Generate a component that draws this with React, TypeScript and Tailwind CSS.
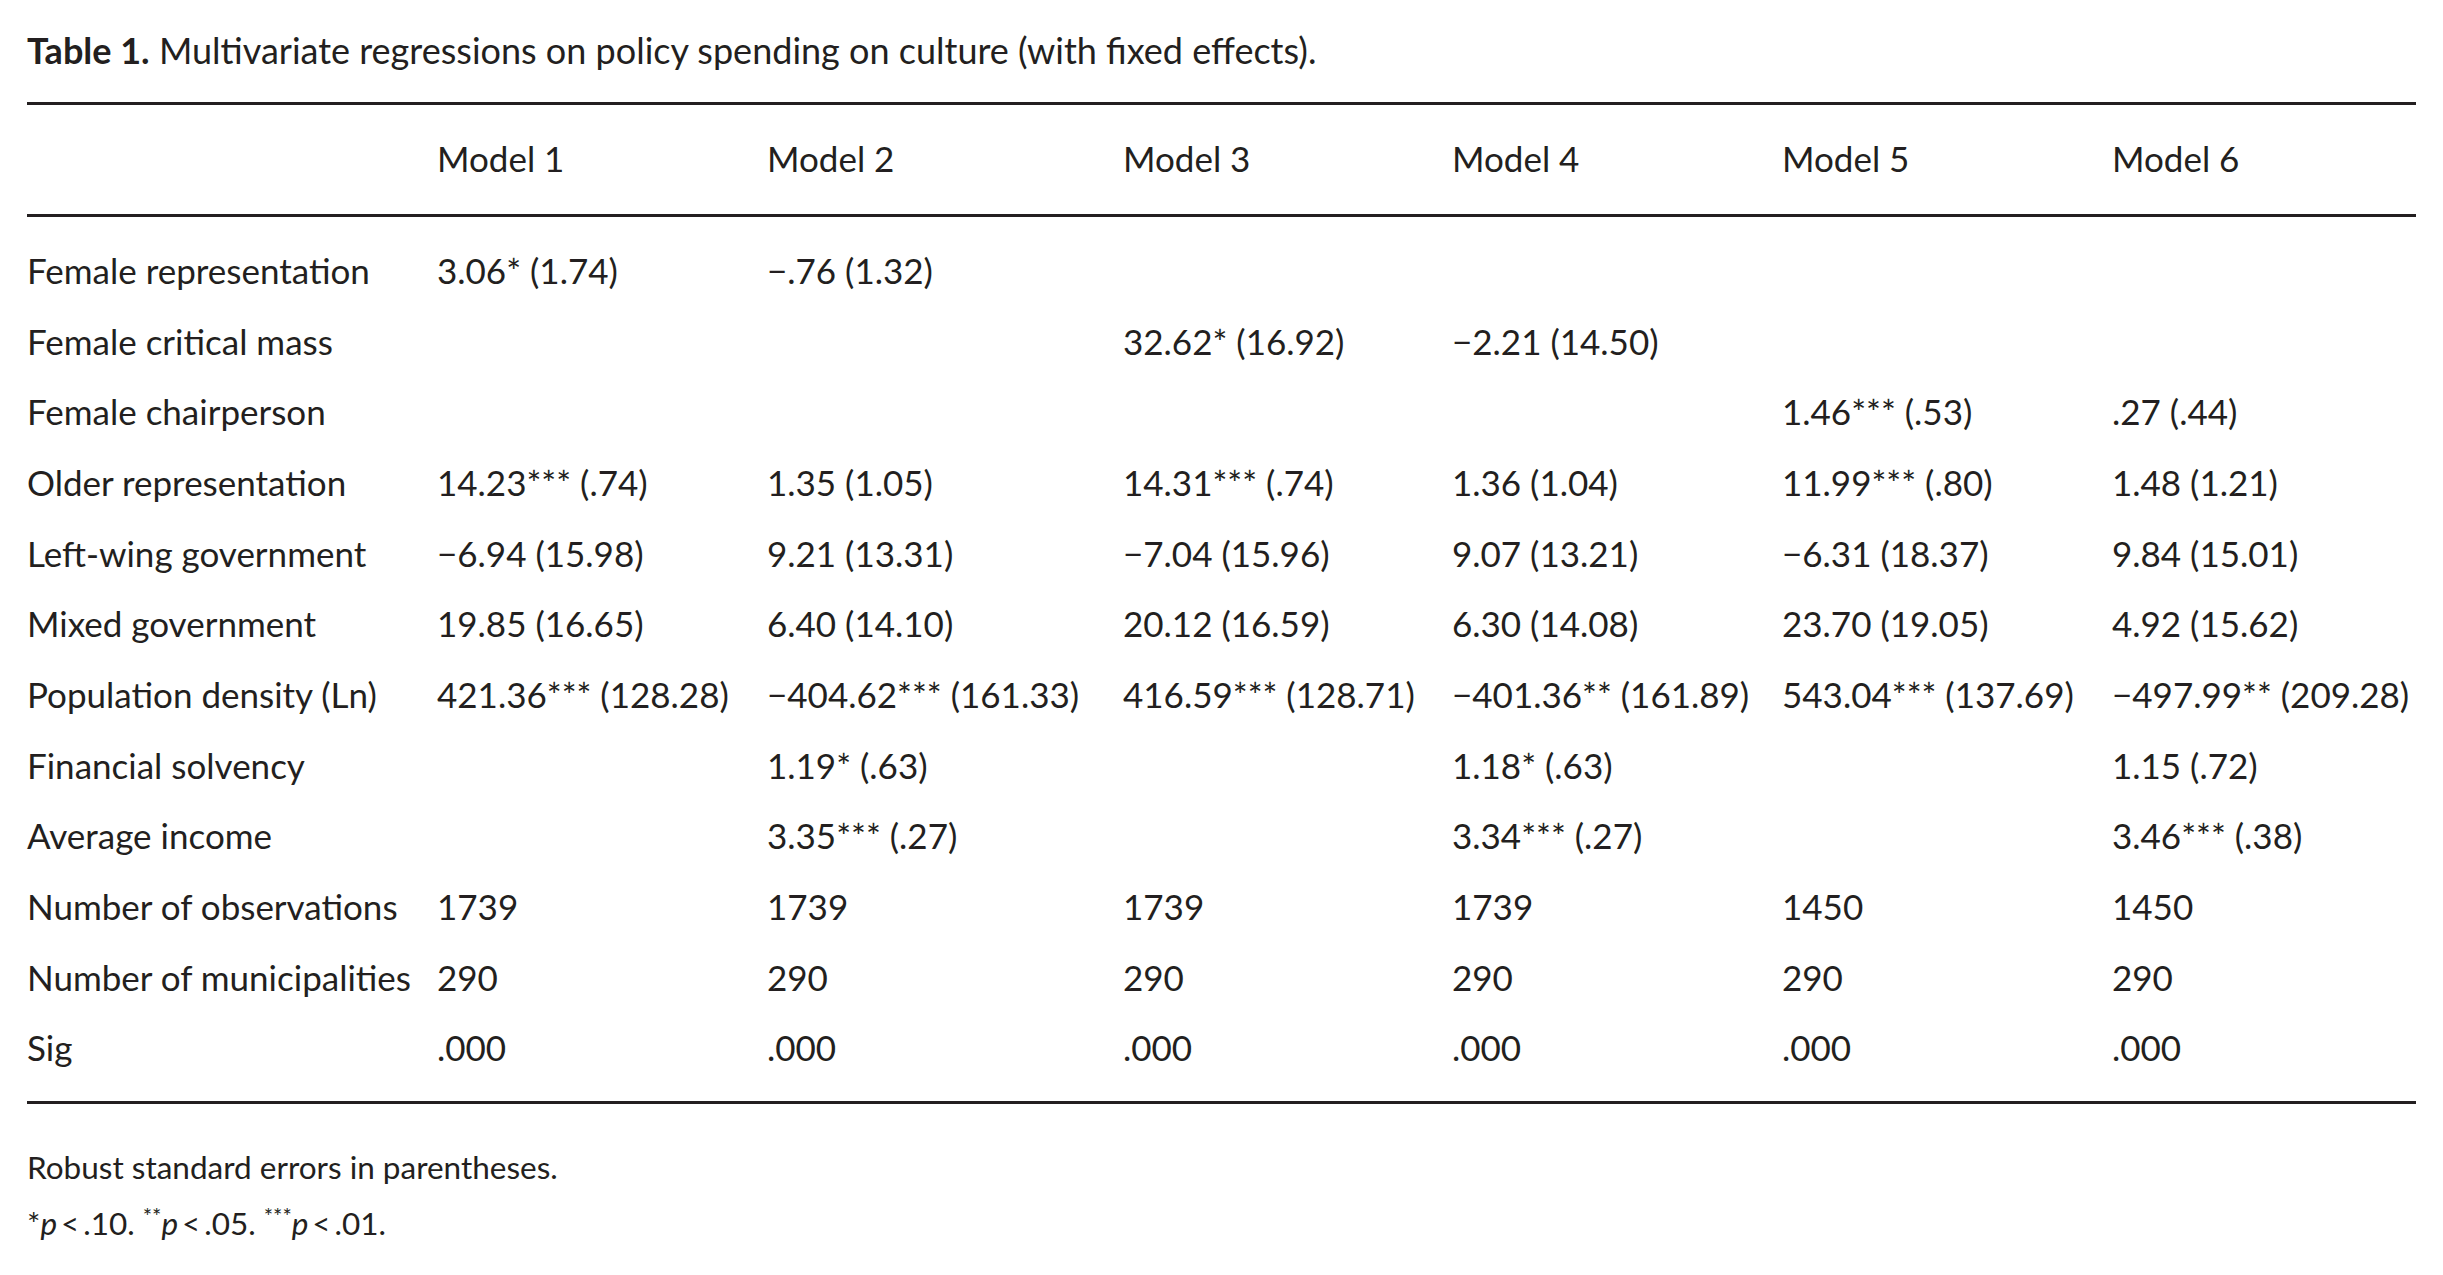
import React from 'react';

type Row = {
  label: string;
  cells: string[];
};

const rows: Row[] = [
  { label: 'Female representation', cells: ['3.06* (1.74)', '\u2212.76 (1.32)', '', '', '', ''] },
  { label: 'Female critical mass', cells: ['', '', '32.62* (16.92)', '\u22122.21 (14.50)', '', ''] },
  { label: 'Female chairperson', cells: ['', '', '', '', '1.46*** (.53)', '.27 (.44)'] },
  { label: 'Older representation', cells: ['14.23*** (.74)', '1.35 (1.05)', '14.31*** (.74)', '1.36 (1.04)', '11.99*** (.80)', '1.48 (1.21)'] },
  { label: 'Left-wing government', cells: ['\u22126.94 (15.98)', '9.21 (13.31)', '\u22127.04 (15.96)', '9.07 (13.21)', '\u22126.31 (18.37)', '9.84 (15.01)'] },
  { label: 'Mixed government', cells: ['19.85 (16.65)', '6.40 (14.10)', '20.12 (16.59)', '6.30 (14.08)', '23.70 (19.05)', '4.92 (15.62)'] },
  { label: 'Population density (Ln)', cells: ['421.36*** (128.28)', '\u2212404.62*** (161.33)', '416.59*** (128.71)', '\u2212401.36** (161.89)', '543.04*** (137.69)', '\u2212497.99** (209.28)'] },
  { label: 'Financial solvency', cells: ['', '1.19* (.63)', '', '1.18* (.63)', '', '1.15 (.72)'] },
  { label: 'Average income', cells: ['', '3.35*** (.27)', '', '3.34*** (.27)', '', '3.46*** (.38)'] },
  { label: 'Number of observations', cells: ['1739', '1739', '1739', '1739', '1450', '1450'] },
  { label: 'Number of municipalities', cells: ['290', '290', '290', '290', '290', '290'] },
  { label: 'Sig', cells: ['.000', '.000', '.000', '.000', '.000', '.000'] },
];

const models = ['Model 1', 'Model 2', 'Model 3', 'Model 4', 'Model 5', 'Model 6'];

// label column + six model columns, starts taken from the reference
const gridCols = 'grid grid-cols-[410px_330px_356px_329px_330px_330px_1fr]';

export default function App() {
  return (
    <div
      className="min-h-screen w-full bg-white px-[27px] pt-[32px] text-[#231f20]"
      style={{ fontFamily: 'Lato, "Open Sans", sans-serif' }}
    >
      {/* caption */}
      <p className="whitespace-nowrap text-[36px] leading-none">
        <span className="font-bold">Table 1.</span> Multivariate regressions on policy spending on culture (with fixed effects).
      </p>

      <div className="mt-[34px] w-[2389px]">
        <div className="h-[3px] bg-[#231f20]" />

        <div className={`${gridCols} pt-[36px] pb-[38px] text-[35px] leading-none`}>
          <div />
          {models.map((m) => (
            <div key={m} className="whitespace-nowrap">{m}</div>
          ))}
        </div>

        <div className="h-[3px] bg-[#231f20]" />

        <div className="pt-[36px] text-[35px] leading-none">
          {rows.map((row) => (
            <div key={row.label} className={`${gridCols} h-[70.67px]`}>
              <div className="whitespace-nowrap">{row.label}</div>
              {row.cells.map((c, i) => (
                <div key={i} className="whitespace-nowrap">{c}</div>
              ))}
            </div>
          ))}
        </div>

        <div className="h-[3px] bg-[#231f20]" />
      </div>

      <div className="mt-[48px] text-[31.5px] leading-none">
        <p>Robust standard errors in parentheses.</p>
        <p className="mt-[25px]">
          *<i>p</i>{'\u2009<\u2009'}.10. <sup className="text-[22px]">**</sup><i>p</i>{'\u2009<\u2009'}.05.{' '}
          <sup className="text-[22px]">***</sup><i>p</i>{'\u2009<\u2009'}.01.
        </p>
      </div>
    </div>
  );
}
